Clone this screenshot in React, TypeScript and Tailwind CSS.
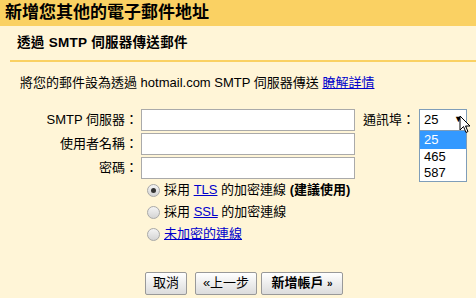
import React from "react";

const font = { fontFamily: '"Liberation Sans", Arial, "Noto Sans CJK TC", sans-serif' };

function Radio({ checked }: { checked?: boolean }) {
  return (
    <span className="flex h-[13px] w-[13px] items-center justify-center rounded-full border border-[#a8a8a8] bg-gradient-to-b from-[#f4f4f4] to-[#d4d4d4]">
      {checked && <span className="h-[5px] w-[5px] rounded-full bg-[#333]" />}
    </span>
  );
}

function Field({ label, children }: { label: string; children?: React.ReactNode }) {
  return (
    <div className="flex h-[22px] items-center">
      <span className="w-[140px] pr-[2px] text-right text-[13px] text-black">{label}</span>
      <span className="ml-[1px] h-[22px] w-[214px] border border-[#aaa] bg-white" />
      {children}
    </div>
  );
}

export default function App() {
  return (
    <div className="h-[298px] w-[476px] overflow-hidden bg-[#fff5d7] text-black" style={font}>
      <div className="flex h-[26px] items-center bg-[#fad163] px-[5px] text-[17px] font-bold">
        新增您其他的電子郵件地址
      </div>
      <div className="flex h-[34px] items-center px-[17px] text-[13.5px] font-bold tracking-[0.3px]">透過 SMTP 伺服器傳送郵件</div>
      <div className="ml-[10px] h-[2px] bg-[#fad163]" />
      <div className="mt-[11px] px-[20px] text-[13px]">
        將您的郵件設為透過 hotmail.com SMTP 伺服器傳送{" "}
        <span className="text-[#0000cc] underline">瞭解詳情</span>
      </div>

      <div className="mt-[16px] flex flex-col gap-[2px]">
        <Field label="SMTP 伺服器：">
          <span className="ml-[8px] text-[13px]">通訊埠：</span>
          <div className="relative ml-[4px]">
            <div className="flex h-[22px] w-[48px] items-center justify-between border border-[#7f9db9] bg-white pl-[4px] pr-[3px] text-[13px]">
              <span>25</span>
              <span className="text-[9px]">▼</span>
            </div>
            <div className="absolute left-0 top-[21px] w-[48px] border border-[#7f9db9] bg-white text-[13px]">
              <div className="h-[18px] bg-[#3399ff] pl-[4px] leading-[18px] text-white">25</div>
              <div className="h-[16px] pl-[4px] leading-[16px]">465</div>
              <div className="h-[16px] pl-[4px] leading-[16px]">587</div>
            </div>
            <svg className="absolute left-[40px] top-[6px]" width="13" height="20" viewBox="0 0 13 20">
              <path d="M1 1 L1 15 L4.5 11.5 L7 17.5 L9 16.5 L6.5 11 L11 11 Z" fill="#fff" stroke="#000" strokeWidth="1" />
            </svg>
          </div>
        </Field>
        <Field label="使用者名稱：" />
        <Field label="密碼：" />
      </div>

      <div className="ml-[147px] mt-[5px] flex flex-col gap-[9px] text-[13px]">
        <div className="flex h-[13px] items-center gap-[4px]">
          <Radio checked />
          <span>
            採用 <span className="text-[#0000cc] underline">TLS</span> 的加密連線 <b>(建議使用)</b>
          </span>
        </div>
        <div className="flex h-[13px] items-center gap-[4px]">
          <Radio />
          <span>
            採用 <span className="text-[#0000cc] underline">SSL</span> 的加密連線
          </span>
        </div>
        <div className="flex h-[13px] items-center gap-[4px]">
          <Radio />
          <span className="text-[#0000cc] underline">未加密的連線</span>
        </div>
      </div>

      <div className="ml-[145px] mt-[31px] flex gap-[8px] text-[13px]">
        <button className="h-[23px] w-[42px] rounded-[2px] border border-[#999] bg-gradient-to-b from-white to-[#dcdcdc]">取消</button>
        <button className="h-[23px] w-[62px] rounded-[2px] border border-[#999] bg-gradient-to-b from-white to-[#dcdcdc]">«上一步</button>
        <button className="-ml-[4px] h-[23px] w-[82px] rounded-[2px] border border-[#999] bg-gradient-to-b from-white to-[#dcdcdc] font-bold">
          新增帳戶 <span className="text-[10px]">»</span>
        </button>
      </div>
    </div>
  );
}
